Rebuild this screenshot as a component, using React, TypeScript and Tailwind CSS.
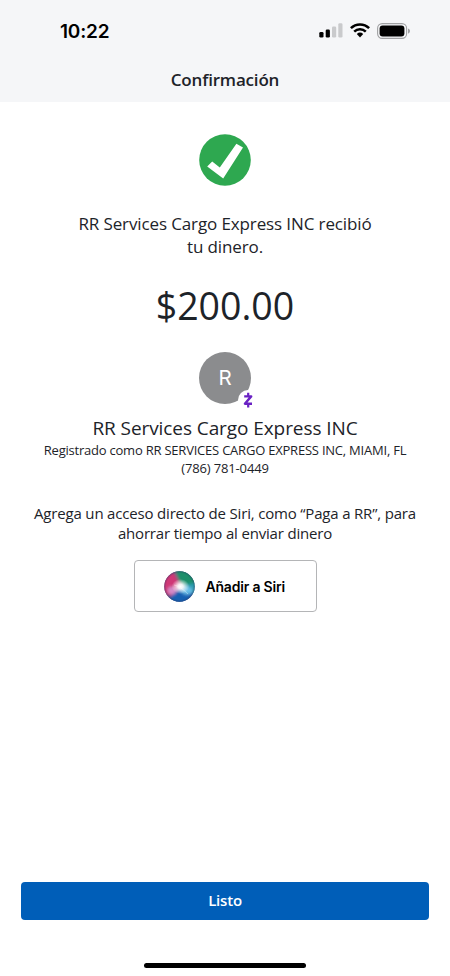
import React from 'react';

function SignalIcon() {
  return (
    <svg width="24" height="15" viewBox="0 0 24 15" className="block">
      <rect x="0.3" y="9" width="4.2" height="5.6" rx="1.3" fill="#000" />
      <rect x="6.7" y="6.4" width="4.2" height="8.2" rx="1.3" fill="#000" />
      <rect x="13" y="3.4" width="4.2" height="11.2" rx="1.3" fill="#c9cacc" />
      <rect x="19.3" y="0.3" width="4.2" height="14.3" rx="1.3" fill="#c9cacc" />
    </svg>
  );
}

function WifiIcon() {
  return (
    <svg width="20" height="15" viewBox="0 0 20 15" className="block">
      <g fill="none" stroke="#000" strokeWidth="2.5">
        <path d="M0.9 5.2a13 13 0 0 1 18.2 0" />
        <path d="M4.2 8.6a8.4 8.4 0 0 1 11.6 0" />
      </g>
      <path d="M6.8 11.1a4.7 4.7 0 0 1 6.4 0L10 14.4z" fill="#000" />
    </svg>
  );
}

function BatteryIcon() {
  return (
    <svg width="34" height="16" viewBox="0 0 34 16" className="block">
      <rect x="0.6" y="0.6" width="29" height="14.8" rx="4.6" fill="none" stroke="#a0a1a3" strokeWidth="1.1" />
      <rect x="2.6" y="2.6" width="24.8" height="10.8" rx="3" fill="#000" />
      <path d="M31 5.4c1.3.5 2 1.5 2 2.6s-.7 2.1-2 2.6z" fill="#a0a1a3" />
    </svg>
  );
}

function SuccessIcon() {
  return (
    <svg width="52" height="52" viewBox="0 0 52 52" className="block">
      <circle cx="26" cy="26" r="25.8" fill="#2ea850" />
      <path d="M8.2 32.6L13.2 27.5L20.8 33.4L37.4 9.7L44 13.6L24.200 44.600Z" fill="#fff" />
    </svg>
  );
}

function ZelleMark() {
  return (
    <svg width="20" height="20" viewBox="0 0 20 20" className="block">
      <circle cx="10" cy="10" r="10" fill="#fff" />
      <path d="M6.2 6.4H13.2L6.9 13.700H14" fill="none" stroke="#6a22c4" strokeWidth="2.4" strokeLinejoin="round" />
      <path d="M10.2 2.8V6.4M10.2 13.7V17.5" stroke="#6a22c4" strokeWidth="2.2" />
    </svg>
  );
}

function SiriOrb() {
  return (
    <svg width="31" height="31" viewBox="0 0 31 31" className="block">
      <defs>
        <clipPath id="orb"><circle cx="15.5" cy="15.5" r="15.2" /></clipPath>
        <radialGradient id="glow">
          <stop offset="0" stopColor="#fff" />
          <stop offset="0.3" stopColor="#fff" stopOpacity="0.9" />
          <stop offset="1" stopColor="#fff" stopOpacity="0" />
        </radialGradient>
        <radialGradient id="rim">
          <stop offset="0.84" stopColor="#27305c" stopOpacity="0" />
          <stop offset="1" stopColor="#27305c" stopOpacity="0.4" />
        </radialGradient>
        <filter id="soft" x="-50%" y="-50%" width="200%" height="200%"><feGaussianBlur stdDeviation="1.8" /></filter>
      </defs>
      <g clipPath="url(#orb)">
        <rect width="31" height="31" fill="#4a5d8e" />
        <g filter="url(#soft)">
          <path d="M10 -3H34V13L17 15Z" fill="#1f8f6b" />
          <path d="M17 15L34 11V23L24 26Z" fill="#2b9cae" />
          <path d="M16 16L30 23L20 34H7L6 26Z" fill="#1560b2" />
          <path d="M-3 5L10 1L17 15L7 25L-2 24Z" fill="#cf3976" />
          <ellipse cx="8" cy="19.5" rx="4.5" ry="4" fill="#d48ac8" />
          <ellipse cx="23" cy="19.5" rx="5.5" ry="4" fill="#68bde8" />
        </g>
        <ellipse cx="16.5" cy="15.5" rx="9" ry="7.5" fill="url(#glow)" />
        <path d="M10 14Q16 15 24 23" fill="none" stroke="#fff" strokeOpacity="0.35" strokeWidth="1" />
        <circle cx="15.5" cy="15.5" r="15.5" fill="url(#rim)" />
      </g>
    </svg>
  );
}

export default function App() {
  return (
    <div className="flex h-[976px] w-[450px] flex-col overflow-hidden bg-white font-['Open_Sans',sans-serif] text-[#1d2329]">
      <header className="h-[102px] bg-[#f5f6f8]">
        <div className="flex h-[61px] items-center justify-between pr-[39px] pl-[60px]">
          <span className="pt-[3px] font-['Inter',sans-serif] text-[19px] font-semibold tracking-[-0.2px] text-black">10:22</span>
          <div className="flex items-center gap-[7px]">
            <SignalIcon />
            <WifiIcon />
            <BatteryIcon />
          </div>
        </div>
        <h1 className="text-center text-[17px] leading-[37px] font-semibold tracking-[-0.18px]">Confirmación</h1>
      </header>

      <main className="flex flex-1 flex-col items-center text-center whitespace-nowrap">
        <div className="mt-8"><SuccessIcon /></div>
        <p className="mt-[27px] text-[17px] leading-[22.5px] tracking-[-0.12px]">
          RR Services Cargo Express INC recibió<br />tu dinero.
        </p>
        <p className="mt-[23px] text-[37.5px] leading-[50px]">$200.00</p>
        <div className="relative mt-[21px] flex size-[52px] items-center justify-center rounded-full bg-[#8b8c8e] font-['Inter',sans-serif] text-[20.5px] text-white">
          R
          <div className="absolute top-[38px] left-[39px]"><ZelleMark /></div>
        </div>
        <h2 className="mt-[10px] text-[19px] leading-[28px] tracking-[-0.08px]">RR Services Cargo Express INC</h2>
        <p className="-mt-px text-[13px] leading-[18px] tracking-[-0.22px]">
          Registrado como RR SERVICES CARGO EXPRESS INC, MIAMI, FL<br />
          <span className="tracking-[-0.15px]">(786) 781-0449</span>
        </p>
        <p className="mt-[26px] text-[15px] leading-5 tracking-[-0.18px]">
          Agrega un acceso directo de Siri, como “Paga a RR”, para<br />ahorrar tiempo al enviar dinero
        </p>
        <button className="mt-[17px] flex h-[52px] w-[183px] items-center rounded-[4px] border border-[#b4b5b7] pl-[29px]">
          <SiriOrb />
          <span className="ml-[11px] pt-px font-['Inter',sans-serif] text-[14px] font-semibold tracking-[-0.2px] text-black">Añadir a Siri</span>
        </button>
      </main>

      <footer className="flex h-[94px] flex-col items-center px-[21px]">
        <button className="h-[37.5px] w-full rounded-[4px] bg-[#005eb8] pb-px text-[15px] font-semibold tracking-[-0.2px] text-white">Listo</button>
        <div className="mt-[43px] h-[5px] w-[162px] rounded-full bg-black" />
      </footer>
    </div>
  );
}
